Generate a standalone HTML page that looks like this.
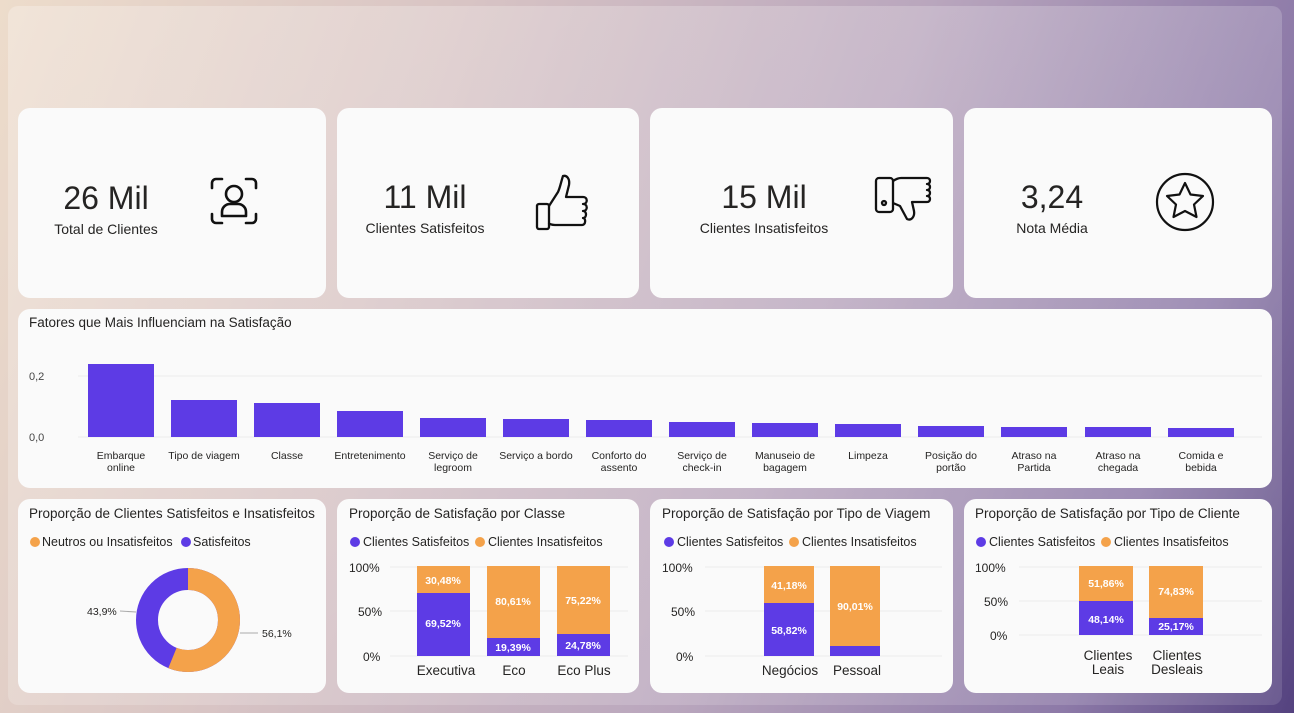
<!DOCTYPE html>
<html><head><meta charset="utf-8"><style>
html,body{margin:0;padding:0;width:1294px;height:713px;overflow:hidden}
body{background:linear-gradient(110deg,#eddccb 0%,#d8c4c4 30%,#b9a6bd 60%,#8d7aa8 85%,#54427f 100%)}
svg{position:absolute;left:0;top:0}
text{font-family:"Liberation Sans Narrow","Liberation Sans",sans-serif}
</style></head><body>
<svg width="1294" height="713" viewBox="0 0 1294 713">
<defs>
<linearGradient id="pan" x1="0" y1="0" x2="1" y2="1">
<stop offset="0" stop-color="#fff" stop-opacity="0.25"/><stop offset="1" stop-color="#fff" stop-opacity="0.12"/></linearGradient>
</defs>
<rect x="8" y="6" width="1274" height="699" rx="10" fill="url(#pan)"/>
<g fill="#fafafa">
<rect x="18" y="108" width="308" height="190" rx="12"/>
<rect x="337" y="108" width="302" height="190" rx="12"/>
<rect x="650" y="108" width="303" height="190" rx="12"/>
<rect x="964" y="108" width="308" height="190" rx="12"/>
<rect x="18" y="309" width="1254" height="179" rx="12"/>
<rect x="18" y="499" width="308" height="194" rx="12"/>
<rect x="337" y="499" width="302" height="194" rx="12"/>
<rect x="650" y="499" width="303" height="194" rx="12"/>
<rect x="964" y="499" width="308" height="194" rx="12"/>
</g>
<!-- KPIs -->
<g fill="#252423" text-anchor="middle">
<text x="106" y="209" font-size="32">26 Mil</text>
<text x="106" y="234" font-size="14">Total de Clientes</text>
<text x="425" y="208" font-size="32">11 Mil</text>
<text x="425" y="233" font-size="14">Clientes Satisfeitos</text>
<text x="764" y="208" font-size="32">15 Mil</text>
<text x="764" y="233" font-size="14">Clientes Insatisfeitos</text>
<text x="1052" y="208" font-size="32">3,24</text>
<text x="1052" y="233" font-size="14">Nota Média</text>
</g>
<g fill="none" stroke="#111" stroke-width="2.6" stroke-linecap="round" stroke-linejoin="round">
<path d="M212 188v-5a4 4 0 0 1 4-4h6M246 179h6a4 4 0 0 1 4 4v5M256 214v5a4 4 0 0 1-4 4h-6M222 223h-6a4 4 0 0 1-4-4v-5"/>
<circle cx="234" cy="194" r="8"/>
<path d="M222 216v-4a8 8 0 0 1 8-8h8a8 8 0 0 1 8 8v4z"/>
</g>
<g fill="none" stroke="#111" stroke-width="2.3" stroke-linejoin="round">
<rect x="537" y="204" width="12" height="25" rx="2"/>
<path d="M549 206l9-14c2-4 3-10 5-16 4-1 7 3 6 9l-3 12h17c5 0 5 7 0 7 5 0 5 7 0 7 4 0 4 7 0 7 3 0 3 7-1 7h-27c-3 0-6-1-6-2"/>
</g>
<g fill="none" stroke="#111" stroke-width="2.3" stroke-linejoin="round">
<rect x="876" y="178" width="17" height="34" rx="3"/>
<circle cx="884" cy="203" r="2"/>
<path d="M893 181c3-2 5-3 8-3h26c4 0 4 6 0 6 4 0 4 6 0 6 4 0 4 6 0 6 4 0 4 6 0 6h-15l2 9c1 6-3 10-7 8l-7-13-7-3"/>
</g>
<circle cx="1185" cy="202" r="28" fill="none" stroke="#111" stroke-width="2.2"/>
<path d="M1185 183l5.5 11.5 12.5 1.5-9 8.5 2.5 12.5-11.5-6-11.5 6 2.5-12.5-9-8.5 12.5-1.5z" fill="none" stroke="#111" stroke-width="2.2" stroke-linejoin="round"/>
<!-- bar chart -->
<text x="29" y="327" font-size="13.5" fill="#252423">Fatores que Mais Influenciam na Satisfação</text>
<g stroke="#ececec"><line x1="78" y1="376" x2="1262" y2="376"/><line x1="78" y1="437" x2="1262" y2="437"/></g>
<g font-size="11" fill="#444"><text x="29" y="380">0,2</text><text x="29" y="441">0,0</text></g>
<g fill="#5d3be5">
<rect x="88" y="364" width="66" height="73"/><rect x="171" y="400" width="66" height="37"/><rect x="254" y="403" width="66" height="34"/><rect x="337" y="411" width="66" height="26"/><rect x="420" y="418" width="66" height="19"/><rect x="503" y="419" width="66" height="18"/><rect x="586" y="420" width="66" height="17"/><rect x="669" y="422" width="66" height="15"/><rect x="752" y="423" width="66" height="14"/><rect x="835" y="424" width="66" height="13"/><rect x="918" y="426" width="66" height="11"/><rect x="1001" y="427" width="66" height="10"/><rect x="1085" y="427" width="66" height="10"/><rect x="1168" y="428" width="66" height="9"/>
</g>
<g font-size="10.5" fill="#252423" text-anchor="middle">
<text x="121" y="459">Embarque</text><text x="121" y="471">online</text>
<text x="204" y="459">Tipo de viagem</text>
<text x="287" y="459">Classe</text>
<text x="370" y="459">Entretenimento</text>
<text x="453" y="459">Serviço de</text><text x="453" y="471">legroom</text>
<text x="536" y="459">Serviço a bordo</text>
<text x="619" y="459">Conforto do</text><text x="619" y="471">assento</text>
<text x="702" y="459">Serviço de</text><text x="702" y="471">check-in</text>
<text x="785" y="459">Manuseio de</text><text x="785" y="471">bagagem</text>
<text x="868" y="459">Limpeza</text>
<text x="951" y="459">Posição do</text><text x="951" y="471">portão</text>
<text x="1034" y="459">Atraso na</text><text x="1034" y="471">Partida</text>
<text x="1118" y="459">Atraso na</text><text x="1118" y="471">chegada</text>
<text x="1201" y="459">Comida e</text><text x="1201" y="471">bebida</text>
</g>
<!-- bottom titles -->
<g font-size="13.5" fill="#252423">
<text x="29" y="518">Proporção de Clientes Satisfeitos e Insatisfeitos</text>
<text x="349" y="518">Proporção de Satisfação por Classe</text>
<text x="662" y="518">Proporção de Satisfação por Tipo de Viagem</text>
<text x="975" y="518">Proporção de Satisfação por Tipo de Cliente</text>
</g>
<g font-size="12.5" fill="#252423">
<circle cx="35" cy="542" r="5" fill="#f4a24a"/><text x="42" y="546">Neutros ou Insatisfeitos</text>
<circle cx="186" cy="542" r="5" fill="#5d3be5"/><text x="193" y="546">Satisfeitos</text>
<circle cx="355" cy="542" r="5" fill="#5d3be5"/><text x="363" y="546">Clientes Satisfeitos</text>
<circle cx="480" cy="542" r="5" fill="#f4a24a"/><text x="488" y="546">Clientes Insatisfeitos</text>
<circle cx="669" cy="542" r="5" fill="#5d3be5"/><text x="677" y="546">Clientes Satisfeitos</text>
<circle cx="794" cy="542" r="5" fill="#f4a24a"/><text x="802" y="546">Clientes Insatisfeitos</text>
<circle cx="981" cy="542" r="5" fill="#5d3be5"/><text x="989" y="546">Clientes Satisfeitos</text>
<circle cx="1106" cy="542" r="5" fill="#f4a24a"/><text x="1114" y="546">Clientes Insatisfeitos</text>
</g>
<!-- donut -->
<circle cx="188" cy="620" r="41" fill="none" stroke="#5d3be5" stroke-width="22"/>
<circle cx="188" cy="620" r="41" fill="none" stroke="#f4a24a" stroke-width="22" stroke-dasharray="144.5 300" transform="rotate(-90 188 620)"/>
<g stroke="#aaa"><line x1="120" y1="611" x2="136" y2="612"/><line x1="240" y1="633" x2="258" y2="633"/></g>
<g font-size="10.5" fill="#252423"><text x="87" y="615">43,9%</text><text x="262" y="637">56,1%</text></g>
<!-- class chart -->
<g stroke="#ececec"><line x1="390" y1="567" x2="628" y2="567"/><line x1="390" y1="611" x2="628" y2="611"/><line x1="390" y1="656" x2="628" y2="656"/>
<line x1="705" y1="567" x2="942" y2="567"/><line x1="705" y1="611" x2="942" y2="611"/><line x1="705" y1="656" x2="942" y2="656"/>
<line x1="1019" y1="567" x2="1262" y2="567"/><line x1="1019" y1="601" x2="1262" y2="601"/><line x1="1019" y1="635" x2="1262" y2="635"/></g>
<g font-size="12" fill="#252423">
<text x="349" y="572">100%</text><text x="358" y="616">50%</text><text x="363" y="661">0%</text>
<text x="662" y="572">100%</text><text x="671" y="616">50%</text><text x="676" y="661">0%</text>
<text x="975" y="572">100%</text><text x="984" y="606">50%</text><text x="990" y="640">0%</text>
</g>
<g fill="#f4a24a">
<rect x="417" y="566" width="53" height="27"/><rect x="487" y="566" width="53" height="72"/><rect x="557" y="566" width="53" height="68"/>
<rect x="764" y="566" width="50" height="37"/><rect x="830" y="566" width="50" height="80"/>
<rect x="1079" y="566" width="54" height="35"/><rect x="1149" y="566" width="54" height="52"/>
</g>
<g fill="#5d3be5">
<rect x="417" y="593" width="53" height="63"/><rect x="487" y="638" width="53" height="18"/><rect x="557" y="634" width="53" height="22"/>
<rect x="764" y="603" width="50" height="53"/><rect x="830" y="646" width="50" height="10"/>
<rect x="1079" y="601" width="54" height="34"/><rect x="1149" y="618" width="54" height="17"/>
</g>
<g font-size="10.5" font-weight="bold" fill="#fff" text-anchor="middle">
<text x="443" y="584">30,48%</text><text x="443" y="627">69,52%</text>
<text x="513" y="605">80,61%</text><text x="513" y="651">19,39%</text>
<text x="583" y="604">75,22%</text><text x="583" y="649">24,78%</text>
<text x="789" y="589">41,18%</text><text x="789" y="634">58,82%</text>
<text x="855" y="610">90,01%</text>
<text x="1106" y="587">51,86%</text><text x="1106" y="623">48,14%</text>
<text x="1176" y="595">74,83%</text><text x="1176" y="630">25,17%</text>
</g>
<g font-size="13.5" fill="#252423" text-anchor="middle">
<text x="446" y="675">Executiva</text><text x="514" y="675">Eco</text><text x="584" y="675">Eco Plus</text>
<text x="790" y="675">Negócios</text><text x="857" y="675">Pessoal</text>
<text x="1108" y="660">Clientes</text><text x="1108" y="674">Leais</text>
<text x="1177" y="660">Clientes</text><text x="1177" y="674">Desleais</text>
</g>
</svg>
</body></html>
